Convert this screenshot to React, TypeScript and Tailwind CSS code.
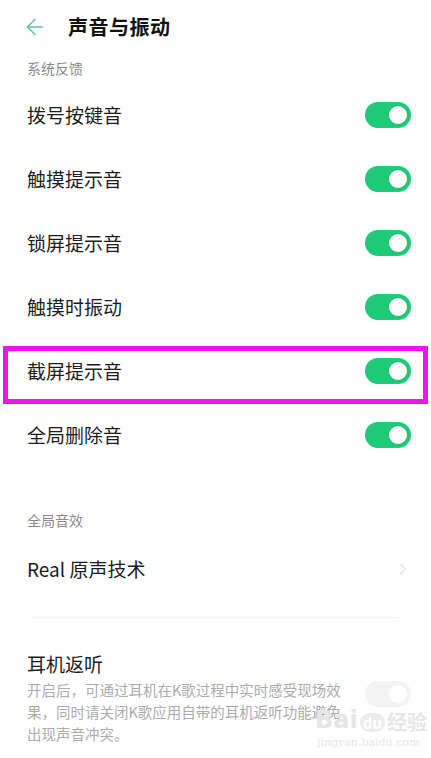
import React from 'react';
import { ArrowLeft, ChevronRight } from 'lucide-react';

const font = { fontFamily: '"Noto Sans CJK SC", "Noto Sans", sans-serif' };

const Toggle: React.FC<{ on?: boolean }> = ({ on = true }) => (
  <div
    className={`w-[46px] h-[26px] rounded-full flex items-center justify-end pr-[4px] ${
      on ? 'bg-[#1fc977]' : 'bg-[#f3f3f3]'
    }`}
  >
    <div className="w-[18px] h-[18px] rounded-full bg-white" />
  </div>
);

const feedbackRows = ['拨号按键音', '触摸提示音', '锁屏提示音', '触摸时振动', '截屏提示音', '全局删除音'];

const App: React.FC = () => {
  return (
    <div className="w-[431px] h-[758px] bg-white overflow-hidden relative" style={font}>
      {/* Header */}
      <div className="h-[54px] flex items-center">
        <div className="w-[68px] pl-[22px] flex items-center">
          <ArrowLeft className="w-[26px] h-[26px] text-[#5cc6a4]" strokeWidth={1.4} />
        </div>
        <h1 className="text-[20px] font-bold text-[#111] tracking-[0.5px]">声音与振动</h1>
      </div>

      {/* 系统反馈 */}
      <div className="h-[29px] flex items-center pl-[27px] text-[14px] text-[#8a8a8a]">系统反馈</div>

      {feedbackRows.map((label, i) => (
        <div key={label} className="h-[64px] flex items-center justify-between pl-[27px] pr-[20px] relative">
          <span className="text-[19px] text-[#1c1c1c]">{label}</span>
          <Toggle />
          {i === 4 && (
            <div className="absolute left-[3px] right-[3px] top-[7px] h-[58px] border-[5px] border-[#ee14ee]" />
          )}
        </div>
      ))}

      {/* 全局音效 */}
      <div className="h-[37px]" />
      <div className="h-[32px] flex items-center pl-[27px] text-[14px] text-[#8a8a8a]">全局音效</div>
      <div className="h-[66px] flex items-center justify-between pl-[27px] pr-[18px]">
        <span className="text-[19px] text-[#1c1c1c]">Real 原声技术</span>
        <ChevronRight className="w-[20px] h-[20px] text-[#e2e2e2]" strokeWidth={1.5} />
      </div>
      <div className="mx-[32px] mt-[15px] h-px bg-[#f1f1f1]" />

      {/* 耳机返听 */}
      <div className="flex items-start justify-between pl-[27px] pr-[20px] pt-[32px]">
        <div>
          <div className="text-[19px] text-[#1c1c1c] leading-[28px]">耳机返听</div>
          <div className="text-[14.5px] text-[#ababab] leading-[22px] mt-[1px]">
            开启后，可通过耳机在K歌过程中实时感受现场效
            <br />
            果，同时请关闭K歌应用自带的耳机返听功能避免
            <br />
            出现声音冲突。
          </div>
        </div>
        <div className="mt-[31px]">
          <Toggle on={false} />
        </div>
      </div>

      {/* watermark */}
      <div className="absolute left-[315px] top-[708px] text-[#e6e6e6] leading-none pointer-events-none">
        <div className="flex items-end gap-[2px]">
          <span className="text-[24px] font-bold" style={{ fontFamily: '"DejaVu Sans", sans-serif' }}>Bai</span>
          <span className="text-[15px] font-bold bg-[#ececec] text-white rounded-full px-[3px] py-[2px]">du</span>
          <span className="text-[20px] font-bold">经验</span>
        </div>
        <div className="text-[11px] mt-[5px] pl-[2px]" style={{ fontFamily: '"DejaVu Serif", serif' }}>
          jingyan.baidu.com
        </div>
      </div>
    </div>
  );
};

export default App;
